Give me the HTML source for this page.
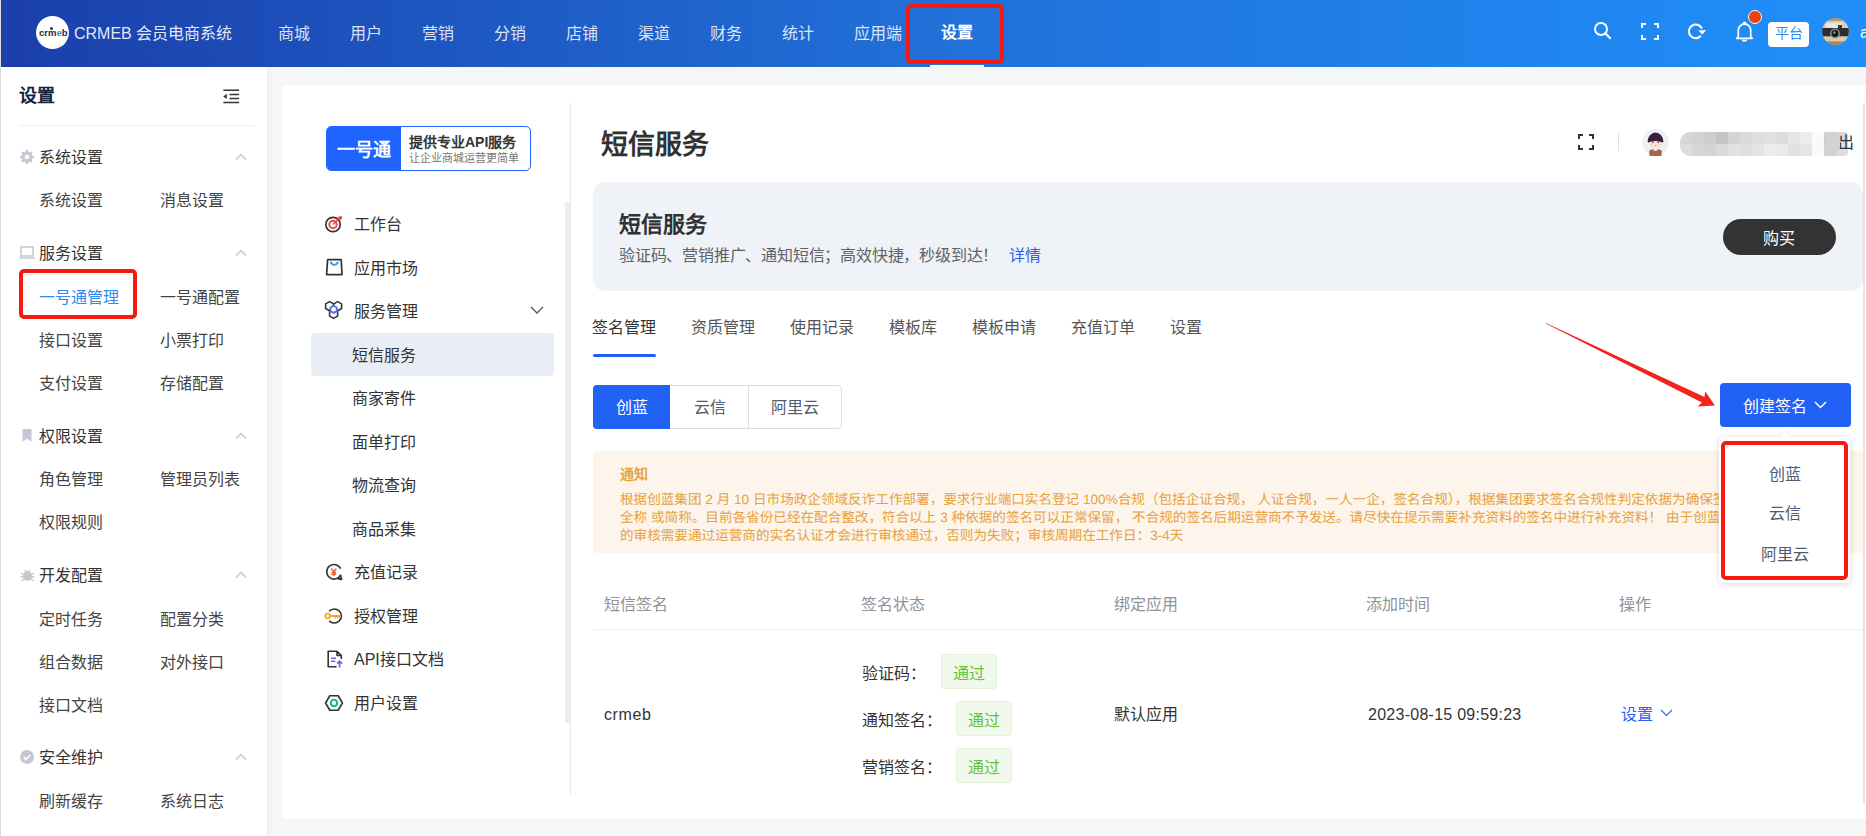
<!DOCTYPE html><html lang="zh-CN"><head><meta charset="utf-8"><style>
*{margin:0;padding:0;box-sizing:border-box}
html,body{width:1866px;height:836px;overflow:hidden;background:#f5f6f8;font-family:"Liberation Sans",sans-serif}
.t{position:absolute;white-space:nowrap}
.a{position:absolute}
</style></head><body>
<div class="a" style="left:0;top:0;width:1866px;height:67px;background:linear-gradient(90deg,#1b3fab 0%,#2170d8 50%,#1f8ffa 100%)"></div>
<div class="a" style="left:0;top:0;width:1px;height:836px;background:#d9dbe0"></div>
<div class="a" style="left:36px;top:16px;width:33px;height:33px;border-radius:50%;background:#fff"></div>
<div class="t" style="left:39px;top:28px;font-size:9.5px;line-height:10px;color:#2a2a2a;font-weight:bold;letter-spacing:0px">cr<span style="color:#2a2a2a">m</span><span style="color:#2d8cf0">e</span>b</div>
<div class="a" style="left:50px;top:27px;width:3px;height:3px;border-radius:50%;background:#333"></div>
<div class="t" style="left:74px;top:26px;font-size:16px;line-height:16px;color:rgba(255,255,255,0.9);font-weight:normal;">CRMEB 会员电商系统</div>
<div class="t" style="left:278px;top:26px;font-size:16px;line-height:16px;color:rgba(255,255,255,0.85);font-weight:normal;">商城</div>
<div class="t" style="left:350px;top:26px;font-size:16px;line-height:16px;color:rgba(255,255,255,0.85);font-weight:normal;">用户</div>
<div class="t" style="left:422px;top:26px;font-size:16px;line-height:16px;color:rgba(255,255,255,0.85);font-weight:normal;">营销</div>
<div class="t" style="left:494px;top:26px;font-size:16px;line-height:16px;color:rgba(255,255,255,0.85);font-weight:normal;">分销</div>
<div class="t" style="left:566px;top:26px;font-size:16px;line-height:16px;color:rgba(255,255,255,0.85);font-weight:normal;">店铺</div>
<div class="t" style="left:638px;top:26px;font-size:16px;line-height:16px;color:rgba(255,255,255,0.85);font-weight:normal;">渠道</div>
<div class="t" style="left:710px;top:26px;font-size:16px;line-height:16px;color:rgba(255,255,255,0.85);font-weight:normal;">财务</div>
<div class="t" style="left:782px;top:26px;font-size:16px;line-height:16px;color:rgba(255,255,255,0.85);font-weight:normal;">统计</div>
<div class="t" style="left:854px;top:26px;font-size:16px;line-height:16px;color:rgba(255,255,255,0.85);font-weight:normal;">应用端</div>
<div class="t" style="left:941px;top:25px;font-size:16px;line-height:16px;color:#fff;font-weight:bold;">设置</div>
<div class="a" style="left:930px;top:65px;width:54px;height:2px;background:#fff"></div>
<div class="a" style="left:906px;top:4px;width:98px;height:60px;border:4px solid #f5190f;border-radius:5px"></div>
<svg class="a" style="left:1590px;top:18px" width="26" height="26" viewBox="0 0 26 26"><circle cx="11" cy="11" r="6" fill="none" stroke="#fff" stroke-width="2"/><line x1="15.5" y1="15.5" x2="20" y2="20" stroke="#fff" stroke-width="2.2" stroke-linecap="round"/></svg>
<svg class="a" style="left:1641px;top:23px" width="18" height="17" viewBox="0 0 18 17" fill="none" stroke="#fff" stroke-width="2"><path d="M1 5V1h4M13 1h4v4M17 12v4h-4M5 16H1v-4"/></svg>
<svg class="a" style="left:1686px;top:22px" width="20" height="20" viewBox="0 0 20 20"><path d="M14.91 13.77A6.8 6.8 0 1 1 15.9 6.5" fill="none" stroke="#fff" stroke-width="2"/><path d="M12.2 8.4L20.2 8.0L16.4 12.6z" fill="#fff"/></svg>
<svg class="a" style="left:1735px;top:21px" width="19" height="21" viewBox="0 0 19 21" fill="none" stroke="#fff" stroke-width="1.7"><path d="M3.3 16V9.5a6.2 6.6 0 0 1 12.4 0V16l1.6 1.3H1.7z" stroke-linejoin="round"/><circle cx="9.5" cy="2.4" r="1" fill="#fff"/><path d="M7.6 18.6a1.9 1.3 0 0 0 3.8 0"/></svg>
<div class="a" style="left:1748px;top:10px;width:14px;height:14px;border-radius:50%;background:#ed4014;border:1.5px solid #fff"></div>
<div class="a" style="left:1768px;top:22px;width:41px;height:25px;border-radius:4px;background:#fff"></div>
<div class="t" style="left:1774.5px;top:25.5px;font-size:14px;line-height:14px;color:#2d8cf0;font-weight:normal;">平台</div>
<svg class="a" style="left:1822px;top:18px" width="27" height="27" viewBox="0 0 27 27"><defs><clipPath id="cc"><circle cx="13.5" cy="13.5" r="13.3"/></clipPath></defs><g clip-path="url(#cc)"><rect width="27" height="27" fill="#b7a793"/><rect y="0" width="27" height="3" fill="#c9955a"/><rect y="3" width="27" height="7" fill="#cfcfcf"/><rect x="4" y="5" width="16" height="5" fill="#e6e6e6"/><rect y="10" width="27" height="8.5" fill="#2e2e2e"/><rect x="16" y="7" width="4" height="3" fill="#3a3a3a"/><rect y="18.5" width="27" height="5" fill="#d8ccb8"/><rect y="23.5" width="27" height="4" fill="#b58550"/><circle cx="13" cy="15.5" r="5" fill="#8a8a8a"/><circle cx="13" cy="15.5" r="3.4" fill="#151515"/><circle cx="12.3" cy="14.6" r="1.3" fill="#3fb08a"/></g></svg>
<div class="t" style="left:1860px;top:25px;font-size:16px;line-height:16px;color:#fff;font-weight:normal;">a</div>
<div class="a" style="left:1px;top:67px;width:266px;height:769px;background:#fff;box-shadow:2px 0 6px rgba(0,0,0,0.05)"></div>
<div class="t" style="left:19px;top:87px;font-size:18px;line-height:18px;color:#17233d;font-weight:bold;">设置</div>
<svg class="a" style="left:222px;top:88px" width="18" height="17" viewBox="0 0 18 17"><path d="M1.4 2.3H17.1M7.5 6.4H17.1M7.5 10.4H17.1M1.4 14.6H17.1" stroke="#333" stroke-width="1.5"/><path d="M1.2 8.4L4.8 5.8V11z" fill="#333"/></svg>
<div class="a" style="left:19px;top:125px;width:236px;height:1px;background:#eceef1"></div>
<svg class="a" style="left:20px;top:157px;margin-top:-7px" width="14" height="14" viewBox="0 0 14 14"><path d="M12.13,5.65 L13.89,5.77 L13.89,8.23 L12.13,8.35 L11.58,9.67 L12.74,11.00 L11.00,12.74 L9.67,11.58 L8.35,12.13 L8.23,13.89 L5.77,13.89 L5.65,12.13 L4.33,11.58 L3.00,12.74 L1.26,11.00 L2.42,9.67 L1.87,8.35 L0.11,8.23 L0.11,5.77 L1.87,5.65 L2.42,4.33 L1.26,3.00 L3.00,1.26 L4.33,2.42 L5.65,1.87 L5.77,0.11 L8.23,0.11 L8.35,1.87 L9.67,2.42 L11.00,1.26 L12.74,3.00 L11.58,4.33z" fill="#c5c8d2"/><circle cx="7" cy="7" r="2.3" fill="#fff"/></svg>
<div class="t" style="left:39px;top:150px;font-size:16px;line-height:16px;color:#333;font-weight:normal;">系统设置</div>
<svg class="a" style="left:235px;top:153px" width="12" height="8" viewBox="0 0 12 8" fill="none" stroke="#c5c8ce" stroke-width="1.5"><path d="M1 6.5L6 1.5l5 5"/></svg>
<div class="t" style="left:39px;top:193px;font-size:16px;line-height:16px;color:#444;font-weight:normal;">系统设置</div>
<div class="t" style="left:160px;top:193px;font-size:16px;line-height:16px;color:#444;font-weight:normal;">消息设置</div>
<svg class="a" style="left:19px;top:253px;margin-top:-7px" width="16" height="13" viewBox="0 0 16 13" fill="none" stroke="#c5c8d2" stroke-width="1.5"><rect x="2" y="1" width="12" height="9"/><path d="M0 12h16"/></svg>
<div class="t" style="left:39px;top:246px;font-size:16px;line-height:16px;color:#333;font-weight:normal;">服务设置</div>
<svg class="a" style="left:235px;top:249px" width="12" height="8" viewBox="0 0 12 8" fill="none" stroke="#c5c8ce" stroke-width="1.5"><path d="M1 6.5L6 1.5l5 5"/></svg>
<div class="t" style="left:39px;top:290px;font-size:16px;line-height:16px;color:#2d8cf0;font-weight:normal;">一号通管理</div>
<div class="t" style="left:160px;top:290px;font-size:16px;line-height:16px;color:#444;font-weight:normal;">一号通配置</div>
<div class="t" style="left:39px;top:333px;font-size:16px;line-height:16px;color:#444;font-weight:normal;">接口设置</div>
<div class="t" style="left:160px;top:333px;font-size:16px;line-height:16px;color:#444;font-weight:normal;">小票打印</div>
<div class="t" style="left:39px;top:376px;font-size:16px;line-height:16px;color:#444;font-weight:normal;">支付设置</div>
<div class="t" style="left:160px;top:376px;font-size:16px;line-height:16px;color:#444;font-weight:normal;">存储配置</div>
<svg class="a" style="left:22px;top:436px;margin-top:-7px" width="10" height="13" viewBox="0 0 10 13"><path d="M0.5 0h9v13L5 9.5 0.5 13z" fill="#c5c8d2"/></svg>
<div class="t" style="left:39px;top:429px;font-size:16px;line-height:16px;color:#333;font-weight:normal;">权限设置</div>
<svg class="a" style="left:235px;top:432px" width="12" height="8" viewBox="0 0 12 8" fill="none" stroke="#c5c8ce" stroke-width="1.5"><path d="M1 6.5L6 1.5l5 5"/></svg>
<div class="t" style="left:39px;top:472px;font-size:16px;line-height:16px;color:#444;font-weight:normal;">角色管理</div>
<div class="t" style="left:160px;top:472px;font-size:16px;line-height:16px;color:#444;font-weight:normal;">管理员列表</div>
<div class="t" style="left:39px;top:515px;font-size:16px;line-height:16px;color:#444;font-weight:normal;">权限规则</div>
<svg class="a" style="left:20px;top:575px;margin-top:-7px" width="15" height="14" viewBox="0 0 15 14"><ellipse cx="7.5" cy="8" rx="4.5" ry="5" fill="#c5c8d2"/><path d="M1 5l3 2M14 5l-3 2M0.5 9h3M14.5 9h-3M1.5 13l2.5-2M13.5 13l-2.5-2M5 2l1.2 1.6M10 2L8.8 3.6" stroke="#c5c8d2" stroke-width="1.3"/></svg>
<div class="t" style="left:39px;top:568px;font-size:16px;line-height:16px;color:#333;font-weight:normal;">开发配置</div>
<svg class="a" style="left:235px;top:571px" width="12" height="8" viewBox="0 0 12 8" fill="none" stroke="#c5c8ce" stroke-width="1.5"><path d="M1 6.5L6 1.5l5 5"/></svg>
<div class="t" style="left:39px;top:612px;font-size:16px;line-height:16px;color:#444;font-weight:normal;">定时任务</div>
<div class="t" style="left:160px;top:612px;font-size:16px;line-height:16px;color:#444;font-weight:normal;">配置分类</div>
<div class="t" style="left:39px;top:655px;font-size:16px;line-height:16px;color:#444;font-weight:normal;">组合数据</div>
<div class="t" style="left:160px;top:655px;font-size:16px;line-height:16px;color:#444;font-weight:normal;">对外接口</div>
<div class="t" style="left:39px;top:698px;font-size:16px;line-height:16px;color:#444;font-weight:normal;">接口文档</div>
<svg class="a" style="left:20px;top:757px;margin-top:-7px" width="14" height="14" viewBox="0 0 14 14"><circle cx="7" cy="7" r="7" fill="#c5c8d2"/><path d="M3.8 7.2l2.2 2.1 4.2-4.3" fill="none" stroke="#fff" stroke-width="1.6"/></svg>
<div class="t" style="left:39px;top:750px;font-size:16px;line-height:16px;color:#333;font-weight:normal;">安全维护</div>
<svg class="a" style="left:235px;top:753px" width="12" height="8" viewBox="0 0 12 8" fill="none" stroke="#c5c8ce" stroke-width="1.5"><path d="M1 6.5L6 1.5l5 5"/></svg>
<div class="t" style="left:39px;top:794px;font-size:16px;line-height:16px;color:#444;font-weight:normal;">刷新缓存</div>
<div class="t" style="left:160px;top:794px;font-size:16px;line-height:16px;color:#444;font-weight:normal;">系统日志</div>
<div class="a" style="left:19px;top:269px;width:118px;height:50px;border:4px solid #f5190f;border-radius:5px"></div>
<div class="a" style="left:282px;top:85px;width:1600px;height:734px;background:#fff;border-radius:4px"></div>
<div class="a" style="left:570px;top:103px;width:1px;height:692px;background:#e8eaec"></div>
<div class="a" style="left:565px;top:202px;width:5px;height:521px;background:#ededed"></div>
<div class="a" style="left:1863px;top:103px;width:2px;height:700px;background:#e4e4e4"></div>
<div class="a" style="left:326px;top:126px;width:205px;height:45px;border:1.5px solid #1f64ff;border-radius:5px;background:#fff;overflow:hidden"><div class="a" style="left:0;top:0;width:74px;height:45px;background:#1f64ff"></div></div>
<div class="t" style="left:337px;top:141px;font-size:18px;line-height:18px;color:#fff;font-weight:bold;">一号通</div>
<div class="t" style="left:409px;top:135px;font-size:14px;line-height:14px;color:#333;font-weight:bold;">提供专业API服务</div>
<div class="t" style="left:409px;top:153px;font-size:11px;line-height:11px;color:#777;font-weight:normal;">让企业商城运营更简单</div>
<div class="a" style="left:311px;top:333px;width:243px;height:43px;background:#e8edf6;border-radius:4px"></div>
<div class="t" style="left:354px;top:217px;font-size:16px;line-height:16px;color:#333;font-weight:normal;">工作台</div>
<div class="t" style="left:354px;top:261px;font-size:16px;line-height:16px;color:#333;font-weight:normal;">应用市场</div>
<div class="t" style="left:354px;top:304px;font-size:16px;line-height:16px;color:#333;font-weight:normal;">服务管理</div>
<div class="t" style="left:352px;top:348px;font-size:16px;line-height:16px;color:#333;font-weight:normal;">短信服务</div>
<div class="t" style="left:352px;top:391px;font-size:16px;line-height:16px;color:#333;font-weight:normal;">商家寄件</div>
<div class="t" style="left:352px;top:435px;font-size:16px;line-height:16px;color:#333;font-weight:normal;">面单打印</div>
<div class="t" style="left:352px;top:478px;font-size:16px;line-height:16px;color:#333;font-weight:normal;">物流查询</div>
<div class="t" style="left:352px;top:522px;font-size:16px;line-height:16px;color:#333;font-weight:normal;">商品采集</div>
<div class="t" style="left:354px;top:565px;font-size:16px;line-height:16px;color:#333;font-weight:normal;">充值记录</div>
<div class="t" style="left:354px;top:609px;font-size:16px;line-height:16px;color:#333;font-weight:normal;">授权管理</div>
<div class="t" style="left:354px;top:652px;font-size:16px;line-height:16px;color:#333;font-weight:normal;">API接口文档</div>
<div class="t" style="left:354px;top:696px;font-size:16px;line-height:16px;color:#333;font-weight:normal;">用户设置</div>
<svg class="a" style="left:324px;top:215px" width="20" height="19" viewBox="0 0 20 19"><circle cx="9" cy="9.5" r="7.2" fill="none" stroke="#333" stroke-width="1.7"/><circle cx="9" cy="9.5" r="3.7" fill="none" stroke="#f5474b" stroke-width="2"/><path d="M9 9.5L15.2 3.3" stroke="#f5474b" stroke-width="1.6"/><path d="M13.6 2.2L17.2 0.8L18.4 2.4L16.6 5.6z" fill="#f5474b"/></svg>
<svg class="a" style="left:325px;top:258px" width="18" height="18" viewBox="0 0 18 18" fill="none"><path d="M2.6 1.7H16.2L17 16.6H1.6z" stroke="#333" stroke-width="1.7" stroke-linejoin="round"/><path d="M5.9 4.6Q9.3 9.6 12.7 4.6" stroke="#1e9fff" stroke-width="1.9" stroke-linecap="round"/></svg>
<svg class="a" style="left:323px;top:300px" width="21" height="21" viewBox="0 0 21 21" fill="none" stroke-width="1.6" stroke-linejoin="round"><polygon points="6.60,1.60 10.58,3.90 10.58,8.50 6.60,10.80 2.62,8.50 2.62,3.90" stroke="#333"/><polygon points="14.60,1.60 18.58,3.90 18.58,8.50 14.60,10.80 10.62,8.50 10.62,3.90" stroke="#333"/><polygon points="10.60,9.20 14.58,11.50 14.58,16.10 10.60,18.40 6.62,16.10 6.62,11.50" stroke="#333"/><polygon points="10.60,5.70 13.72,7.50 13.72,11.10 10.60,12.90 7.48,11.10 7.48,7.50" stroke="#4f74f9" stroke-width="1.9" fill="#fff"/></svg>
<svg class="a" style="left:530px;top:306px" width="14" height="8" viewBox="0 0 14 8" fill="none" stroke="#555" stroke-width="1.3"><path d="M1 1l6 6 6-6"/></svg>
<svg class="a" style="left:325px;top:563px" width="18" height="18" viewBox="0 0 18 18" fill="none"><path d="M15.8 11.6A7.3 7.3 0 1 1 15.6 5.6" stroke="#333" stroke-width="1.6"/><path d="M12.6 15.6L16.6 16.4L15.6 12.2" stroke="#333" stroke-width="1.6" stroke-linejoin="round"/><path d="M6.2 5.5L8.8 8.6L11.4 5.5M8.8 8.6V13M6.4 9.4H11.2M6.4 11.3H11.2" stroke="#f0642a" stroke-width="1.5"/></svg>
<svg class="a" style="left:324px;top:607px" width="20" height="18" viewBox="0 0 20 18" fill="none"><path d="M5.2 4.2A7 7 0 1 1 5.2 13.8" stroke="#333" stroke-width="1.7"/><circle cx="3.6" cy="9" r="2.3" stroke="#f5a623" stroke-width="1.8"/><path d="M5.9 9H16.2M11.2 9V11.3M13.6 9V11.3M16 9V10.8" stroke="#f5a623" stroke-width="1.8"/></svg>
<svg class="a" style="left:326px;top:650px" width="18" height="18" viewBox="0 0 18 18" fill="none"><path d="M11 1.2H2.2V16.8H10.5M11 1.2L15.3 5.5V9M11 1.2V5.5H15.3" stroke="#333" stroke-width="1.6" stroke-linejoin="round"/><path d="M5 8.2H10M5 11.2H9.3" stroke="#8e4ff5" stroke-width="1.6"/><path d="M13.6 17.4V11.2M11.2 13.6L13.6 11.2L16 13.6" stroke="#8e4ff5" stroke-width="1.7"/></svg>
<svg class="a" style="left:324px;top:694px" width="20" height="18" viewBox="0 0 20 18" fill="none"><polygon points="18.40,9.00 14.20,16.27 5.80,16.27 1.60,9.00 5.80,1.73 14.20,1.73" stroke="#333" stroke-width="1.6" stroke-linejoin="round"/><circle cx="10" cy="9" r="3.2" stroke="#14b89e" stroke-width="2.1"/></svg>
<div class="t" style="left:601px;top:132px;font-size:27px;line-height:27px;color:#303133;font-weight:bold;">短信服务</div>
<svg class="a" style="left:1578px;top:134px" width="16" height="16" viewBox="0 0 16 16" fill="none" stroke="#333" stroke-width="2"><path d="M1 5V1h4M11 1h4v4M15 11v4h-4M5 15H1v-4"/></svg>
<div class="a" style="left:1618px;top:133px;width:1px;height:18px;background:#dcdee2"></div>
<svg class="a" style="left:1642px;top:129px" width="27" height="27" viewBox="0 0 27 27"><circle cx="13.5" cy="13.3" r="13.3" fill="#e8f2fb"/><path d="M7.2 21.5Q13.5 18 19.8 21.5L19.5 27H7.5z" fill="#a0664a"/><rect x="11.6" y="19.5" width="3.8" height="2.2" fill="#fff"/><ellipse cx="13.5" cy="14.5" rx="6.4" ry="6" fill="#fde3d8"/><path d="M5.6 12.5A7.9 9 0 0 1 21.4 12.5L20.8 13.5Q13.5 10.4 6.2 13.5z" fill="#3d1f3a"/><circle cx="10.8" cy="13.3" r="0.9" fill="#666"/><circle cx="16.2" cy="13.3" r="0.9" fill="#666"/><ellipse cx="13.5" cy="16.8" rx="1.1" ry="0.7" fill="#f2a4a4"/><ellipse cx="9.5" cy="15.6" rx="1" ry="0.6" fill="#f6b8b8"/><ellipse cx="17.5" cy="15.6" rx="1" ry="0.6" fill="#f6b8b8"/></svg>
<div class="a" style="left:1680px;top:132px;width:168px;height:24px;border-radius:10px 4px 4px 10px;overflow:hidden;filter:blur(0.5px)">
<div class="a" style="left:0px;top:0px;width:12px;height:12px;background:rgb(214,214,216)"></div>
<div class="a" style="left:12px;top:0px;width:12px;height:12px;background:rgb(210,210,212)"></div>
<div class="a" style="left:24px;top:0px;width:12px;height:12px;background:rgb(206,206,208)"></div>
<div class="a" style="left:36px;top:0px;width:12px;height:12px;background:rgb(196,196,198)"></div>
<div class="a" style="left:48px;top:0px;width:12px;height:12px;background:rgb(212,212,214)"></div>
<div class="a" style="left:60px;top:0px;width:12px;height:12px;background:rgb(218,218,220)"></div>
<div class="a" style="left:72px;top:0px;width:12px;height:12px;background:rgb(222,222,224)"></div>
<div class="a" style="left:84px;top:0px;width:12px;height:12px;background:rgb(224,224,226)"></div>
<div class="a" style="left:96px;top:0px;width:12px;height:12px;background:rgb(220,220,222)"></div>
<div class="a" style="left:108px;top:0px;width:12px;height:12px;background:rgb(230,230,232)"></div>
<div class="a" style="left:120px;top:0px;width:12px;height:12px;background:rgb(236,236,238)"></div>
<div class="a" style="left:132px;top:0px;width:12px;height:12px;background:rgb(250,250,252)"></div>
<div class="a" style="left:144px;top:0px;width:12px;height:12px;background:rgb(206,206,208)"></div>
<div class="a" style="left:156px;top:0px;width:12px;height:12px;background:rgb(214,214,216)"></div>
<div class="a" style="left:0px;top:12px;width:12px;height:12px;background:rgb(220,220,222)"></div>
<div class="a" style="left:12px;top:12px;width:12px;height:12px;background:rgb(214,214,216)"></div>
<div class="a" style="left:24px;top:12px;width:12px;height:12px;background:rgb(212,212,214)"></div>
<div class="a" style="left:36px;top:12px;width:12px;height:12px;background:rgb(218,218,220)"></div>
<div class="a" style="left:48px;top:12px;width:12px;height:12px;background:rgb(226,226,228)"></div>
<div class="a" style="left:60px;top:12px;width:12px;height:12px;background:rgb(222,222,224)"></div>
<div class="a" style="left:72px;top:12px;width:12px;height:12px;background:rgb(228,228,230)"></div>
<div class="a" style="left:84px;top:12px;width:12px;height:12px;background:rgb(236,236,238)"></div>
<div class="a" style="left:96px;top:12px;width:12px;height:12px;background:rgb(234,234,236)"></div>
<div class="a" style="left:108px;top:12px;width:12px;height:12px;background:rgb(226,226,228)"></div>
<div class="a" style="left:120px;top:12px;width:12px;height:12px;background:rgb(230,230,232)"></div>
<div class="a" style="left:132px;top:12px;width:12px;height:12px;background:rgb(250,250,252)"></div>
<div class="a" style="left:144px;top:12px;width:12px;height:12px;background:rgb(210,210,212)"></div>
<div class="a" style="left:156px;top:12px;width:12px;height:12px;background:rgb(222,222,224)"></div>
</div>
<div class="t" style="left:1838px;top:135px;font-size:16px;line-height:16px;color:#333;font-weight:normal;">出</div>
<div class="a" style="left:1826px;top:132px;width:14px;height:24px;background:#d2d2d4;border-radius:0 10px 10px 0"></div>
<div class="a" style="left:593px;top:182px;width:1270px;height:109px;background:#eff2f7;border-radius:12px"></div>
<div class="t" style="left:619px;top:214px;font-size:22px;line-height:22px;color:#303133;font-weight:bold;">短信服务</div>
<div class="t" style="left:619px;top:248px;font-size:16px;line-height:16px;color:#606266;font-weight:normal;letter-spacing:-0.2px">验证码、营销推广、通知短信；高效快捷，秒级到达！</div>
<div class="t" style="left:1009px;top:248px;font-size:16px;line-height:16px;color:#2d5ff5;font-weight:normal;">详情</div>
<div class="a" style="left:1723px;top:219px;width:113px;height:36px;border-radius:18px;background:#333"></div>
<div class="t" style="left:1763px;top:231px;font-size:16px;line-height:16px;color:#fff;font-weight:normal;">购买</div>
<div class="t" style="left:592px;top:320px;font-size:16px;line-height:16px;color:#333;font-weight:normal;">签名管理</div>
<div class="t" style="left:691px;top:320px;font-size:16px;line-height:16px;color:#555;font-weight:normal;">资质管理</div>
<div class="t" style="left:790px;top:320px;font-size:16px;line-height:16px;color:#555;font-weight:normal;">使用记录</div>
<div class="t" style="left:889px;top:320px;font-size:16px;line-height:16px;color:#555;font-weight:normal;">模板库</div>
<div class="t" style="left:972px;top:320px;font-size:16px;line-height:16px;color:#555;font-weight:normal;">模板申请</div>
<div class="t" style="left:1071px;top:320px;font-size:16px;line-height:16px;color:#555;font-weight:normal;">充值订单</div>
<div class="t" style="left:1170px;top:320px;font-size:16px;line-height:16px;color:#555;font-weight:normal;">设置</div>
<div class="a" style="left:593px;top:354px;width:63px;height:3px;background:#1f5ffa;border-radius:2px"></div>
<div class="a" style="left:593px;top:385px;width:249px;height:44px;border:1px solid #dcdee2;border-radius:4px;background:#fff"></div>
<div class="a" style="left:593px;top:385px;width:77px;height:44px;background:#2261f6;border-radius:4px 0 0 4px"></div>
<div class="a" style="left:748px;top:386px;width:1px;height:42px;background:#dcdee2"></div>
<div class="t" style="left:616px;top:400px;font-size:16px;line-height:16px;color:#fff;font-weight:normal;">创蓝</div>
<div class="t" style="left:694px;top:400px;font-size:16px;line-height:16px;color:#515a6e;font-weight:normal;">云信</div>
<div class="t" style="left:771px;top:400px;font-size:16px;line-height:16px;color:#515a6e;font-weight:normal;">阿里云</div>
<div class="a" style="left:1720px;top:383px;width:131px;height:44px;background:#2261f6;border-radius:4px"></div>
<div class="t" style="left:1743px;top:399px;font-size:16px;line-height:16px;color:#fff;font-weight:normal;">创建签名</div>
<svg class="a" style="left:1814px;top:401px" width="13" height="8" viewBox="0 0 13 8" fill="none" stroke="#fff" stroke-width="1.5"><path d="M1 1l5.5 5.5L12 1"/></svg>
<div class="a" style="left:593px;top:451px;width:1270px;height:102px;background:#fdf5ec;border-radius:4px;overflow:hidden"><div class="t" style="left:27px;top:16px;font-size:14px;line-height:14px;color:#e6a23c;font-weight:bold">通知</div><div class="t" style="left:27px;top:42px;font-size:13.6px;text-rendering:geometricPrecision;line-height:13px;color:#e6a23c">根据创蓝集团 2 月 10 日市场政企领域反诈工作部署，要求行业端口实名登记 100%合规（包括企证合规， 人证合规，一人一企，签名合规），根据集团要求签名合规性判定依据为确保签名为企业</div><div class="t" style="left:27px;top:60px;font-size:13.6px;text-rendering:geometricPrecision;line-height:13px;color:#e6a23c">全称 或简称。目前各省份已经在配合整改，符合以上 3 种依据的签名可以正常保留， 不合规的签名后期运营商不予发送。请尽快在提示需要补充资料的签名中进行补充资料！ 由于创蓝认证</div><div class="t" style="left:27px;top:78px;font-size:13.6px;text-rendering:geometricPrecision;line-height:13px;color:#e6a23c">的审核需要通过运营商的实名认证才会进行审核通过，否则为失败；审核周期在工作日：3-4天</div></div>
<div class="t" style="left:604px;top:597px;font-size:16px;line-height:16px;color:#909399;font-weight:normal;">短信签名</div>
<div class="t" style="left:861px;top:597px;font-size:16px;line-height:16px;color:#909399;font-weight:normal;">签名状态</div>
<div class="t" style="left:1114px;top:597px;font-size:16px;line-height:16px;color:#909399;font-weight:normal;">绑定应用</div>
<div class="t" style="left:1366px;top:597px;font-size:16px;line-height:16px;color:#909399;font-weight:normal;">添加时间</div>
<div class="t" style="left:1619px;top:597px;font-size:16px;line-height:16px;color:#909399;font-weight:normal;">操作</div>
<div class="a" style="left:593px;top:629px;width:1270px;height:1px;background:#ebeef5"></div>
<div class="t" style="left:604px;top:707px;font-size:16px;line-height:16px;color:#333;font-weight:normal;letter-spacing:0.6px">crmeb</div>
<div class="t" style="left:862px;top:666px;font-size:16px;line-height:16px;color:#333;font-weight:normal;">验证码：</div>
<div class="a" style="left:941px;top:654px;width:56px;height:35px;background:#f0f9eb;border:1px solid #e1f3d8;border-radius:4px"></div>
<div class="t" style="left:953px;top:666px;font-size:16px;line-height:16px;color:#67c23a;font-weight:normal;">通过</div>
<div class="t" style="left:862px;top:713px;font-size:16px;line-height:16px;color:#333;font-weight:normal;">通知签名：</div>
<div class="a" style="left:956px;top:701px;width:56px;height:35px;background:#f0f9eb;border:1px solid #e1f3d8;border-radius:4px"></div>
<div class="t" style="left:968px;top:713px;font-size:16px;line-height:16px;color:#67c23a;font-weight:normal;">通过</div>
<div class="t" style="left:862px;top:760px;font-size:16px;line-height:16px;color:#333;font-weight:normal;">营销签名：</div>
<div class="a" style="left:956px;top:748px;width:56px;height:35px;background:#f0f9eb;border:1px solid #e1f3d8;border-radius:4px"></div>
<div class="t" style="left:968px;top:760px;font-size:16px;line-height:16px;color:#67c23a;font-weight:normal;">通过</div>
<div class="t" style="left:1114px;top:707px;font-size:16px;line-height:16px;color:#333;font-weight:normal;">默认应用</div>
<div class="t" style="left:1368px;top:707px;font-size:16px;line-height:16px;color:#333;font-weight:normal;letter-spacing:0.26px">2023-08-15 09:59:23</div>
<div class="t" style="left:1621px;top:707px;font-size:16px;line-height:16px;color:#2d5ff5;font-weight:normal;">设置</div>
<svg class="a" style="left:1660px;top:709px" width="13" height="8" viewBox="0 0 13 8" fill="none" stroke="#2d5ff5" stroke-width="1.1"><path d="M1 1l5.5 5.5L12 1"/></svg>
<div class="a" style="left:1719px;top:437px;width:131px;height:146px;background:#fff;border-radius:4px;box-shadow:0 1px 6px rgba(0,0,0,0.15)"></div>
<div class="a" style="left:1781px;top:433px;width:8px;height:8px;background:#fff;transform:rotate(45deg);box-shadow:-1px -1px 2px rgba(0,0,0,0.06)"></div>
<div class="t" style="left:1769px;top:467px;font-size:16px;line-height:16px;color:#515a6e;font-weight:normal;">创蓝</div>
<div class="t" style="left:1769px;top:506px;font-size:16px;line-height:16px;color:#515a6e;font-weight:normal;">云信</div>
<div class="t" style="left:1761px;top:547px;font-size:16px;line-height:16px;color:#515a6e;font-weight:normal;">阿里云</div>
<div class="a" style="left:1721px;top:441px;width:127px;height:139px;border:4px solid #f5190f;border-radius:5px"></div>
<svg class="a" style="left:0;top:0" width="1866" height="836"><polygon points="1545.93,322.93 1704.52,397.02 1705.13,391.20 1714.90,405.40 1697.69,406.49 1701.90,402.41 1545.67,323.47" fill="#f5221b"/></svg>
</body></html>
